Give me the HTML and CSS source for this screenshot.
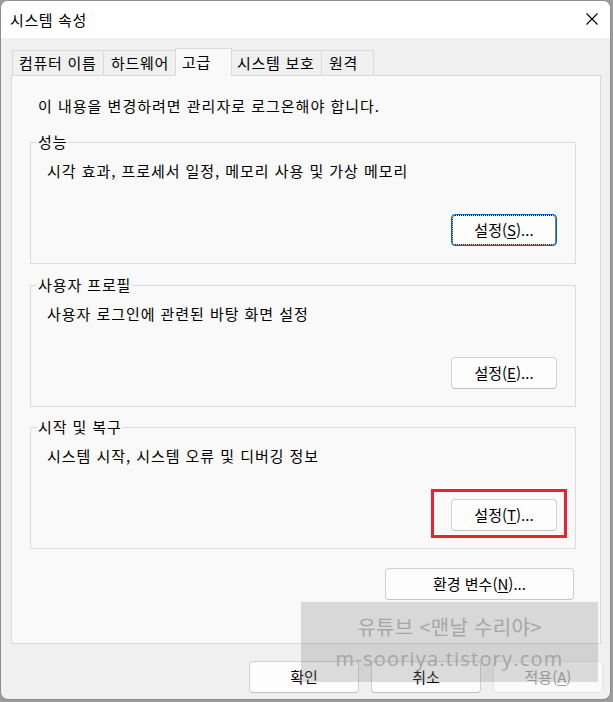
FILE: index.html
```html
<!DOCTYPE html>
<html lang="ko">
<head>
<meta charset="utf-8">
<title>시스템 속성</title>
<link rel="stylesheet" href="styles.css">
</head>
<body>
<div class="window">
  <div class="titlebar">
    <span class="title">시스템 속성</span>
    <svg class="close" width="12" height="12" viewBox="0 0 12 12"><path d="M0.5 0.5 L11.5 11.5 M11.5 0.5 L0.5 11.5" stroke="#000" stroke-width="1.1" fill="none"/></svg>
  </div>
  <div class="content">
    <div class="tabs">
      <div class="tab t1">컴퓨터 이름</div>
      <div class="tab t2">하드웨어</div>
      <div class="tab t3 active">고급</div>
      <div class="tab t4">시스템 보호</div>
      <div class="tab t5">원격</div>
    </div>
    <div class="panel">
      <p class="info">이 내용을 변경하려면 관리자로 로그온해야 합니다.</p>
      <div class="group g1">
        <div class="legend">성능</div>
        <p class="desc">시각 효과, 프로세서 일정, 메모리 사용 및 가상 메모리</p>
        <div class="btn-row"><button class="btn set focus">설정(<u>S</u>)...</button></div>
      </div>
      <div class="group g2">
        <div class="legend">사용자 프로필</div>
        <p class="desc">사용자 로그인에 관련된 바탕 화면 설정</p>
        <div class="btn-row"><button class="btn set">설정(<u>E</u>)...</button></div>
      </div>
      <div class="group g3">
        <div class="legend">시작 및 복구</div>
        <p class="desc">시스템 시작, 시스템 오류 및 디버깅 정보</p>
        <div class="btn-row"><button class="btn set">설정(<u>T</u>)...</button></div>
      </div>
      <div class="env-row"><button class="btn env">환경 변수(<u>N</u>)...</button></div>
    </div>
    <div class="footer">
      <button class="btn foot">확인</button>
      <button class="btn foot">취소</button>
      <button class="btn foot disabled">적용(<u>A</u>)</button>
    </div>
  </div>
  <div class="redbox"></div>
  <div class="watermark">
    <div class="wm1">유튜브 &lt;맨날 수리야&gt;</div>
    <div class="wm2">m-sooriya.tistory.com</div>
  </div>
</div>
</body>
</html>
```

FILE: styles.css
```css
* { box-sizing: border-box; }
html, body { margin: 0; padding: 0; }
body {
  background: #9c9c9c;
  width: 613px;
  height: 702px;
  font-family: "Noto Sans CJK KR", "Noto Sans", sans-serif;
  font-size: 15px;
  color: #000;
}
.window {
  position: relative;
  width: 611px;
  height: 700px;
  border: 1px solid #8c8c8c;
  border-radius: 8px;
  overflow: hidden;
  background: #f0f0f0;
}
.titlebar {
  height: 37px;
  background: #fff;
  display: flex;
  align-items: center;
  justify-content: space-between;
  padding: 0 12px 0 9px;
}
.title { line-height: 20px; font-size: 15px; letter-spacing: 0.6px; }
.close { display: block; margin-top: -1px; }

.tabs {
  display: flex;
  align-items: flex-end;
  padding: 10px 0 0 11px;
  height: 37px;
}
.tab {
  height: 25px;
  line-height: 24px;
  border: 1px solid #d9d9d9;
  border-bottom: none;
  background: #f0f0f0;
  padding-left: 6px;
  white-space: nowrap;
  margin-left: -1px;
  letter-spacing: 0.7px;
}
.tab.t1 { margin-left: 0; width: 92px; }
.tab.t2 { width: 73px; padding-left: 7px; }
.tab.t3 { width: 57px; }
.tab.t4 { width: 91px; padding-left: 5px; }
.tab.t5 { width: 53px; padding-left: 7px; }
.tab.active {
  position: relative;
  z-index: 2;
  height: 28px;
  line-height: 25px;
  background: #f9f9f9;
  margin-bottom: -1px;
}

.panel {
  margin-left: 10px;
  width: 590px;
  height: 569px;
  border: 1px solid #dadada;
  background: #f9f9f9;
  padding: 20px 24px 0 18px;
}
.info {
  margin: 0 0 0 8px;
  line-height: 20px;
  letter-spacing: 1px;
}
.group {
  border: 1px solid #dcdcdc;
  padding: 0 18px 17px 16px;
}
.g1 { margin-top: 26px; }
.g2 { margin-top: 21px; }
.g3 { margin-top: 20px; }
.legend {
  display: table;
  margin: -11px 0 0 -10px;
  padding: 0 1px;
  line-height: 20px;
  background: #f9f9f9;
  letter-spacing: 0.9px;
}
.desc {
  margin: 9px 0 0 0;
  line-height: 20px;
  letter-spacing: 0.95px;
}
.btn-row {
  display: flex;
  justify-content: flex-end;
  margin-top: 33px;
}
.btn {
  font-family: inherit;
  font-size: 15px;
  color: #000;
  height: 32px;
  padding: 0;
  line-height: 28px;
  background: #fdfdfd;
  border: 1px solid #d0d0d0;
  border-bottom-color: #c4c4c4;
  border-radius: 4px;
}
.btn u { text-underline-offset: 2px; }
.set { width: 106px; }
.focus {
  border: 1px solid #0067c0;
  outline: 1px dotted #000;
  outline-offset: -2px;
}
.env-row {
  display: flex;
  justify-content: flex-end;
  margin-top: 19px;
  padding-right: 2px;
}
.env { width: 189px; }

.footer {
  display: flex;
  justify-content: flex-end;
  gap: 12px;
  margin-top: 17px;
  padding-right: 7px;
}
.foot { width: 110px; }
.disabled {
  color: #a0a0a0;
  border-color: #e3e3e3;
  background: #fbfbfb;
}

.redbox {
  position: absolute;
  left: 430px;
  top: 488px;
  width: 136px;
  height: 49px;
  border: 3px solid #e8232d;
}
.watermark {
  position: absolute;
  left: 300px;
  top: 601px;
  width: 297px;
  height: 80px;
  background: rgba(128, 128, 128, 0.27);
  padding-top: 9px;
  text-align: center;
  font-size: 20px;
  line-height: 32px;
  color: #a6a6a6;
  white-space: nowrap;
}
.wm1 { letter-spacing: 0.3px; }
.wm2 { font-family: "Open Sans", "Noto Sans", sans-serif; letter-spacing: 1.2px; }
```
